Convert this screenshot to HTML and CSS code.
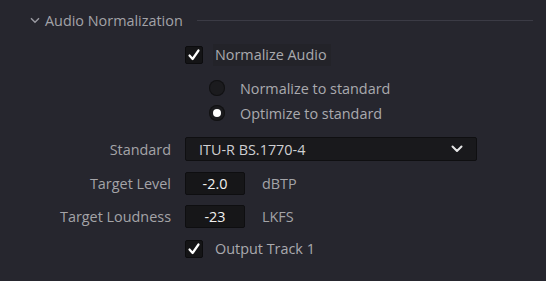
FILE: index.html
```html
<!DOCTYPE html>
<html>
<head>
<meta charset="utf-8">
<link rel="stylesheet" href="styles.css">
</head>
<body>
<div class="panel">
  <div class="header">
    <svg class="chev" width="10" height="7" viewBox="0 0 10 7"><path d="M1 1.2 L5 5.2 L9 1.2" fill="none" stroke="#9a9aa2" stroke-width="1.4"/></svg>
    <span class="title">Audio Normalization</span>
    <span class="rule"></span>
  </div>

  <div class="row r-check1">
    <span class="label"></span>
    <div class="ctrl">
      <span class="checkbox"><svg width="14" height="14" viewBox="0 0 14 14"><path d="M2.5 7.5 L5.6 11 L11.5 2.5" fill="none" stroke="#fff" stroke-width="2.2" stroke-linecap="round" stroke-linejoin="round"/></svg></span>
      <span class="cb-text hl">Normalize Audio</span>
    </div>
  </div>

  <div class="row r-radio1">
    <span class="label"></span>
    <div class="ctrl indent">
      <span class="radio"></span>
      <span class="rb-text">Normalize to standard</span>
    </div>
  </div>

  <div class="row r-radio2">
    <span class="label"></span>
    <div class="ctrl indent">
      <span class="radio on"><span class="dot"></span></span>
      <span class="rb-text">Optimize to standard</span>
    </div>
  </div>

  <div class="row r-std">
    <span class="label">Standard</span>
    <div class="ctrl">
      <div class="select">
        <span>ITU-R BS.1770-4</span>
        <svg width="12" height="8" viewBox="0 0 12 8"><path d="M1.5 1.5 L6 6 L10.5 1.5" fill="none" stroke="#e6e6e6" stroke-width="2" stroke-linecap="round" stroke-linejoin="round"/></svg>
      </div>
    </div>
  </div>

  <div class="row r-level">
    <span class="label">Target Level</span>
    <div class="ctrl">
      <span class="input">-2.0</span>
      <span class="unit">dBTP</span>
    </div>
  </div>

  <div class="row r-loud">
    <span class="label">Target Loudness</span>
    <div class="ctrl">
      <span class="input">-23</span>
      <span class="unit">LKFS</span>
    </div>
  </div>

  <div class="row r-check2">
    <span class="label"></span>
    <div class="ctrl">
      <span class="checkbox"><svg width="14" height="14" viewBox="0 0 14 14"><path d="M2.5 7.5 L5.6 11 L11.5 2.5" fill="none" stroke="#fff" stroke-width="2.2" stroke-linecap="round" stroke-linejoin="round"/></svg></span>
      <span class="cb-text">Output Track 1</span>
    </div>
  </div>
</div>
</body>
</html>
```

FILE: styles.css
```css
html, body {
  margin: 0;
  padding: 0;
  background: #26262e;
}
body {
  width: 546px;
  height: 281px;
  overflow: hidden;
  font-family: "Open Sans", "Noto Sans", sans-serif;
  font-size: 14.4px;
  color: #a9a9ad;
}
.panel {
  display: flex;
  flex-direction: column;
  padding-top: 10px;
}
.header {
  display: flex;
  align-items: center;
  height: 20px;
  padding-left: 30px;
  padding-right: 13px;
}
.chev {
  margin-right: 5px;
  margin-top: 1px;
}
.title {
  color: #a3a3a8;
  white-space: nowrap;
}
.rule {
  flex: 1;
  height: 1px;
  background: #3b3b45;
  margin-left: 14px;
}
.row {
  display: flex;
  align-items: center;
  gap: 14px;
}
.label {
  width: 171px;
  text-align: right;
  flex: none;
  color: #a4a4a8;
  white-space: nowrap;
}
.ctrl {
  display: flex;
  align-items: center;
}
.indent {
  padding-left: 24px;
}
.r-check1 { height: 22px; margin-top: 14px; }
.r-radio1 { height: 22px; margin-top: 11px; }
.r-radio2 { height: 22px; margin-top: 3px; }
.r-std { height: 24px; margin-top: 13px; }
.r-level { height: 23px; margin-top: 11px; }
.r-loud { height: 23px; margin-top: 10px; }
.r-check2 { height: 21px; margin-top: 10px; }

.checkbox {
  width: 16px;
  height: 16px;
  background: #141416;
  border: 1px solid #0c0c0e;
  border-radius: 2px;
  display: flex;
  align-items: center;
  justify-content: center;
}
.cb-text {
  margin-left: 10px;
  padding: 1px 4px 2px 2px;
  color: #aaaaae;
}
.cb-text.hl {
  background: #232329;
}
.radio {
  width: 16px;
  height: 16px;
  border-radius: 50%;
  background: #1b1b1e;
  box-shadow: inset 0 0 0 1px #111113;
  display: flex;
  align-items: center;
  justify-content: center;
}
.radio .dot {
  width: 8px;
  height: 8px;
  border-radius: 50%;
  background: #ffffff;
}
.rb-text {
  margin-left: 15px;
  color: #aaaaae;
}
.select {
  background: #19191c;
  border: 1px solid #0f0f11;
  border-radius: 2px;
  display: flex;
  align-items: center;
  justify-content: space-between;
  padding: 0 13px 0 13px;
  box-sizing: border-box;
  width: 292px;
  height: 24px;
  color: #cfcfd2;
}
.input {
  width: 60px;
  height: 23px;
  box-sizing: border-box;
  background: #161618;
  border: 1px solid #0e0e10;
  border-radius: 2px;
  display: flex;
  align-items: center;
  justify-content: center;
  color: #f0f0f0;
}
.unit {
  margin-left: 17px;
  color: #a4a4a8;
}
```
